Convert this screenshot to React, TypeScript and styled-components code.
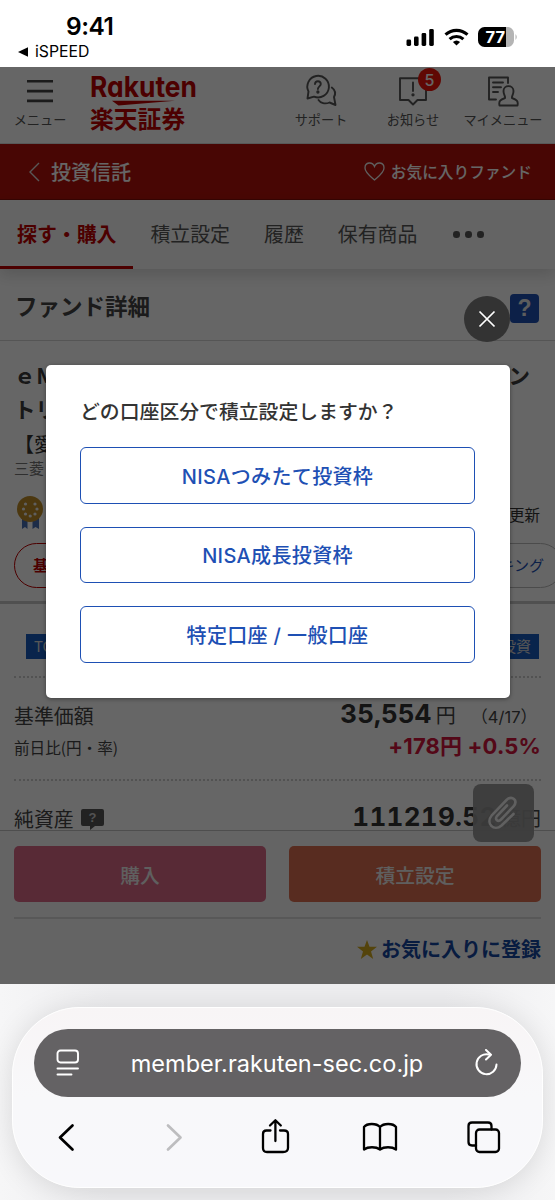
import React from "react";
import styled, { createGlobalStyle } from "styled-components";

const Global = createGlobalStyle`
  * { box-sizing: border-box; }
  body { margin: 0; background: #fff; font-family: Inter, "Noto Sans CJK JP", sans-serif; color: #333; }
  button { font: inherit; border: 0; padding: 0; background: none; color: inherit; }
  svg { display: block; flex: none; }
`;

const Phone = styled.div`
  width: 555px; height: 1200px; display: flex; flex-direction: column; overflow: hidden;
`;

/* status bar */
const Status = styled.header`
  height: 67px; flex: none; display: flex; justify-content: space-between;
  color: #000; background: #fff; padding: 11px 37px 0 18px;
`;
const Clock = styled.div`
  font-size: 24.5px; line-height: 30px; font-weight: 600; letter-spacing: -0.5px; padding-left: 48px;
`;
const BackApp = styled.div`
  display: flex; align-items: center; gap: 7px; font-size: 15.8px; line-height: 24px; margin-top: -1px;
`;
const StatusIcons = styled.div`
  display: flex; align-items: center; gap: 9px; height: 30px; margin-top: 11px;
`;

/* web page */
const Page = styled.main`
  position: relative; height: 917px; flex: none; display: flex; flex-direction: column;
  background: #fff; overflow: hidden; font-family: "Noto Sans CJK JP", sans-serif;
`;
const SiteHeader = styled.div`
  height: 77px; flex: none; display: flex; padding: 0 11px 0 13px; border-bottom: 1px solid #ddd;
`;
const HeaderItem = styled.div<{ $w: number }>`
  width: ${(p) => p.$w}px; display: flex; flex-direction: column; align-items: center;
  padding-top: 7px; font-size: 13.2px; line-height: 20px; color: #555; white-space: nowrap;
  position: relative; svg { margin-bottom: 2px; }
`;
const Logo = styled.div`
  margin: 5px auto 0 23px; width: 112px; color: #bf0000;
`;
const LogoSub = styled.div`
  font-size: 23.8px; line-height: 28px; font-weight: 700; margin-top: -2px; white-space: nowrap;
`;
const Badge = styled.span`
  position: absolute; left: 54px; top: 1px; width: 23px; height: 23px; border-radius: 50%;
  background: #f0160a; color: #fff; display: flex; align-items: center; justify-content: center;
  font: 500 16px/1 Inter, sans-serif;
`;
const RedBar = styled.div`
  height: 56px; flex: none; background: #b4110a; color: #fff; display: flex; align-items: center;
  padding: 0 23px 0 28px; font-weight: 500; border-bottom: 1px solid #8a0d08;
`;
const BarTitle = styled.div`
  display: flex; align-items: center; gap: 11px; font-size: 20px; line-height: 30px; margin-right: auto;
`;
const BarLink = styled.div`
  display: flex; align-items: center; gap: 6px; font-size: 15.7px; line-height: 24px;
`;
const Tabs = styled.nav`
  height: 69px; flex: none; display: flex; position: relative; background: #fafafa;
  box-shadow: 0 6px 14px rgba(0, 0, 0, 0.14);
`;
const Tab = styled.div<{ $on?: boolean }>`
  font-size: 19.9px; line-height: 30px; padding: 19px 17px 0; white-space: nowrap;
  color: ${(p) => (p.$on ? "#bf0000" : "#555")};
  font-weight: ${(p) => (p.$on ? 700 : 400)};
  border-bottom: ${(p) => (p.$on ? "3px solid #bf0000" : "0")};
`;
const Dots = styled.div`
  display: flex; gap: 5.5px; padding: 31px 0 0 19px;
  i { width: 6.5px; height: 6.5px; border-radius: 50%; background: #555; }
`;
const Heading = styled.div`
  height: 72px; flex: none; display: flex; justify-content: space-between; padding: 19px 16px 0 15px;
  border-bottom: 1px solid #d5d5d5; font-size: 22.5px; line-height: 34px; font-weight: 700; color: #444;
`;
const Help = styled.span`
  width: 29px; height: 29px; margin-top: 6px; border-radius: 4px; background: #1e50b4; color: #e8e8e8;
  font: 700 23px/29px "Liberation Sans", sans-serif; text-align: center;
`;
const Body = styled.div`
  height: 489px; flex: none; overflow: hidden; display: flex; flex-direction: column;
  > * { flex-shrink: 0; }
`;
const FundName = styled.h1`
  margin: 17px 0 0 14px; width: 535px; font-size: 21.5px; line-height: 34px; font-weight: 700; color: #3c3c3c; white-space: nowrap;
`;
const Alias = styled.div`
  margin: 3px 0 0 14px; font-size: 20px; line-height: 29px; color: #333;
`;
const Company = styled.div`
  margin: -2px 0 1px 14px; font-size: 15px; line-height: 24px; color: #777;
`;
const Rating = styled.div`
  display: flex; justify-content: space-between; align-items: flex-end; height: 49px;
  padding: 0 15px 0 17px; font-size: 15.5px; line-height: 32px;
`;
const Pills = styled.div`
  display: flex; justify-content: space-between; width: 549px; margin: 13px 0 0 14px;
`;
const Pill = styled.div<{ $on?: boolean }>`
  height: 45px; border-radius: 23px; padding: 0 18px; font-size: 15px; line-height: 41px;
  font-weight: ${(p) => (p.$on ? 700 : 400)};
  border: ${(p) => (p.$on ? "1.5px solid #bf0000" : "1.5px solid #bbb")};
  color: ${(p) => (p.$on ? "#bf0000" : "#1e50b4")};
`;
const Rule = styled.div`
  height: 3px; margin-top: 13px; background: #c8c8c8;
`;
const Tags = styled.div`
  display: flex; justify-content: space-between; margin: 30px 14px 0; padding: 0 2px 17px 12px;
  border-bottom: 2px dotted #ccc;
`;
const Tag = styled.span`
  height: 25px; background: #185abe; color: #d8d8d8; font-size: 15px; line-height: 24px; padding: 0 8px;
`;
const Metric = styled.section`
  height: 103px; margin: 0 14px; display: flex; justify-content: space-between;
  border-bottom: 2px dotted #ccc; padding-top: 21px; white-space: nowrap;
`;
const Labels = styled.div` font-size: 19.9px; line-height: 34px; color: #444; `;
const Sub = styled.div` font-size: 15.6px; line-height: 29px; `;
const LabelRow = styled.div` display: flex; align-items: center; gap: 7px; `;
const Values = styled.div` text-align: right; line-height: 34px; font-size: 20px; color: #444; margin-top: -2px; `;
const Amount = styled.b<{ $ls?: number }>`
  font: 700 26px/34px Inter, sans-serif; font-feature-settings: "tnum"; color: #333;
  letter-spacing: ${(p) => p.$ls ?? 0}px;
`;
const DateNote = styled.span` font: 400 16.5px/34px Inter, "Noto Sans CJK JP", sans-serif; margin: 0 4px 0 11px; `;
const Change = styled.div`
  font: 700 22px/30px Inter, "Noto Sans CJK JP", sans-serif; color: #d2143c; margin-top: -3px; letter-spacing: 0.15px;
`;
const Sticky = styled.footer`
  flex: 1; border-top: 1px solid #c4c4c4; background: #fafafa; padding: 15px 14px 0;
`;
const Actions = styled.div`
  display: grid; grid-template-columns: 252px 252px; justify-content: space-between;
  padding-bottom: 15px; border-bottom: 2px solid #dcdcdc;
`;
const Action = styled.button<{ $bg: string }>`
  height: 56px; border-radius: 5px; background: ${(p) => p.$bg}; color: #eee; font-size: 19.8px; font-weight: 500;
`;
const Favorite = styled.div`
  display: flex; justify-content: flex-end; align-items: center; gap: 4px; margin-top: 15px;
  color: #1446a0; font-size: 20px; line-height: 30px; font-weight: 700;
`;
const Clip = styled.div`
  position: absolute; left: 472.5px; top: 717px; width: 61px; height: 58px; border-radius: 8px;
  background: rgba(150, 150, 150, 0.95); display: grid; place-items: center;
`;

/* dialog */
const Shade = styled.div`
  position: absolute; inset: 0; background: rgba(0, 0, 0, 0.6);
`;
const Dialog = styled.div`
  position: absolute; left: 45.5px; top: 298px; width: 464px; height: 333px; border-radius: 5px;
  background: #fff; padding: 28px 34.500px 0; display: flex; flex-direction: column; gap: 23px;
  box-shadow: 0 1px 4px rgba(0, 0, 0, 0.4);
`;
const Question = styled.h2`
  margin: 0 0 -5px; font-size: 19.85px; line-height: 36px; font-weight: 500; color: #333; white-space: nowrap;
`;
const Choice = styled.button`
  height: 56.6px; flex: none; border: 1.5px solid #1e50b4; border-radius: 6px; color: #1e50b4;
  font: 500 20px/1 Inter, "Noto Sans CJK JP", sans-serif; letter-spacing: 0.35px; white-space: pre; padding-top: 3px;
`;
const Close = styled.button`
  position: absolute; left: 464px; top: 229px; width: 46px; height: 46px; border-radius: 50%;
  background: #333; display: grid; place-items: center;
`;

/* browser controls */
const Browser = styled.div`
  flex: 1; padding: 23px 12px 0; background: linear-gradient(90deg, #f6f6f7, #eeeef0 20%, #eeeef0 80%, #f6f6f7);
`;
const Panel = styled.div`
  height: 181px; border-radius: 68px; padding: 21px; border: 1.5px solid #fff;
  background: linear-gradient(#f8f5f6, #f8f8fa 50%, #f8f8fb);
  box-shadow: 0 3px 30px rgba(0, 0, 0, 0.12);
`;
const Address = styled.div`
  height: 68px; border-radius: 34px; background: #646264; color: #fff; display: flex;
  align-items: center; justify-content: space-between; padding: 0 21px 0 22px;
  font-size: 23.5px;
`;
const Tools = styled.div`
  height: 80px; display: flex; align-items: center; justify-content: space-between; padding: 0 16px 0 12px;
`;

const ToolIcon = ({ children, muted }: { children: React.ReactNode; muted?: boolean }) => (
  <svg width="40" height="40" viewBox="0 0 40 40" fill="none" stroke={muted ? "#bdbdbf" : "#000"}
    strokeWidth="2.3" strokeLinecap="round" strokeLinejoin="round">{children}</svg>
);

const HeaderIcon = ({ children }: { children: React.ReactNode }) => (
  <svg width="36" height="34" viewBox="0 0 36 34" fill="none" stroke="#555" strokeWidth="1.9"
    strokeLinejoin="round" strokeLinecap="round">{children}</svg>
);

export default function App() {
  return (
    <Phone>
      <Global />
      <Status>
        <div>
          <Clock>9:41</Clock>
          <BackApp>
            <svg width="10" height="10" viewBox="0 0 10 10"><path d="M0 5L10 .3V9.7Z" /></svg>
            iSPEED
          </BackApp>
        </div>
        <StatusIcons>
          <svg width="29" height="18" viewBox="0 0 29 18">
            <rect x="0.5" y="11.5" width="4.6" height="6.5" rx="1.4" />
            <rect x="8" y="8.5" width="4.6" height="9.5" rx="1.4" />
            <rect x="15.6" y="5" width="4.6" height="13" rx="1.4" />
            <rect x="23.2" y="1" width="4.6" height="17" rx="1.4" />
          </svg>
          <svg width="25" height="18" viewBox="0 0 25 18" fill="none" stroke="#000" strokeWidth="3.1">
            <path d="M1.5 6.6C7.8.9 17.2.9 23.5 6.6" />
            <path d="M5.6 11.2C9.6 7.5 15.4 7.5 19.4 11.2" />
            <path d="M12.5 17.6L8.9 14.1Q12.5 11 16.1 14.1Z" fill="#000" stroke="none" />
          </svg>
          <svg width="40" height="20" viewBox="0 0 40 20">
            <path d="M6.500 0H29V20H6.500A6.500 6.500 0 0 1 0 13.500V6.500A6.500 6.500 0 0 1 6.500 0Z" />
            <path d="M29 0A6.500 6.500 0 0 1 36 6.500V13.500A6.500 6.500 0 0 1 29 20H28V0Z" fill="#b4b4b4" />
            <path d="M37.500 7Q40 10 37.500 13Z" fill="#b4b4b4" />
            <text x="7.500" y="16" fontFamily="Inter" fontWeight="700" fontSize="16.500" fill="#fff" textLength="19.500">77</text>
          </svg>
        </StatusIcons>
      </Status>

      <Page>
        <SiteHeader>
          <HeaderItem $w={54}>
            <svg width="26" height="34" viewBox="0 0 26 34" stroke="#444" strokeWidth="2.600">
              <path d="M0 7.300H26M0 17.100H26M0 26.900H26" />
            </svg>
            メニュー
          </HeaderItem>
          <Logo>
            <svg width="112" height="34" viewBox="0 0 112 34" fill="#bf0000">
              <text x="0" y="25" fontFamily="Inter, sans-serif" fontWeight="700" fontSize="29" textLength="107"
                lengthAdjust="spacingAndGlyphs" style={{ fontFeatureSettings: '"cv11"' }}>Rakuten</text>
              <path d="M22 28.800H85L28.500 33.500Z" />
            </svg>
            <LogoSub>楽天証券</LogoSub>
          </Logo>
          <HeaderItem $w={86}>
            <HeaderIcon>
              <path d="M4.500 24.500L5.500 17.500A10.800 10.800 0 1 1 11 22.600Z" />
              <path d="M28.800 13.500C32 16 33 19.500 31 23L32.500 31L26.500 28.500C22 30.500 17.500 29 15.500 26" />
              <path d="M12 10Q12.200 7.300 14.900 7.300T17.800 10C17.800 12.300 14.900 12.500 14.900 15" />
              <circle cx="14.900" cy="18" r="0.700" fill="#555" />
            </HeaderIcon>
            サポート
          </HeaderItem>
          <HeaderItem $w={98}>
            <HeaderIcon>
              <path d="M5 4.200H31V26H22.500L18 30.500L13.500 26H5Z" />
              <path d="M18 8.500V17" /><circle cx="18" cy="20.800" r="0.700" fill="#555" />
            </HeaderIcon>
            <Badge>5</Badge>
            お知らせ
          </HeaderItem>
          <HeaderItem $w={82}>
            <HeaderIcon>
              <path d="M11 25.500H4V3.500H23V9M8 8.500H18M8 13.300H16M8 18H13" />
              <path d="M14.500 31.500C13.500 27 15.500 25.500 20 24C20.500 22 18.500 21 18.500 17C18.500 10.500 28.500 10.500 28.500 17C28.500 21 26.500 22 27 24C31.500 25.500 33.500 27 32.500 31.500Z" />
            </HeaderIcon>
            マイメニュー
          </HeaderItem>
        </SiteHeader>

        <RedBar>
          <BarTitle>
            <svg width="12" height="20" viewBox="0 0 12 20" fill="none" stroke="#ddd" strokeWidth="1.400"><path d="M11 1L2 10L11 19" /></svg>
            投資信託
          </BarTitle>
          <BarLink>
            <svg width="21" height="19" viewBox="0 0 21 19" fill="none" stroke="#eee" strokeWidth="1.300">
              <path d="M10.500 18C6 14 1 10.500 1 6C1 -.3 8.500 -.5 10.500 4.500C12.500 -.5 20 -.3 20 6C20 10.500 15 14 10.500 18Z" />
            </svg>
            お気に入りファンド
          </BarLink>
        </RedBar>

        <Tabs>
          <Tab $on>探す・購入</Tab>
          <Tab>積立設定</Tab>
          <Tab>履歴</Tab>
          <Tab>保有商品</Tab>
          <Dots><i /><i /><i /></Dots>
        </Tabs>
        <Heading>ファンド詳細<Help>?</Help></Heading>

        <Body>
          <FundName>ｅＭＡＸＩＳ　Ｓｌｉｍ　全世界株式（オール・カン<br />トリー）</FundName>
          <Alias>【愛称：オルカン】</Alias>
          <Company>三菱ＵＦＪアセットマネジメント</Company>
          <Rating>
            <svg width="26" height="34" viewBox="0 0 26 34">
              <path d="M5 21V33L8 31L10.500 33V21ZM15.500 21V33L18.500 31L22 33V21Z" fill="#466eb4" />
              <circle cx="13" cy="13" r="13" fill="#be8c28" />
              <g fill="#eee">
                <circle cx="8.500" cy="8" r="1.600" /><circle cx="18" cy="8" r="1.600" />
                <circle cx="6.500" cy="13" r="1.600" /><circle cx="20" cy="13" r="1.600" />
                <circle cx="8.500" cy="18" r="1.600" /><circle cx="18" cy="18" r="1.600" />
                <circle cx="13.200" cy="20" r="1.600" />
              </g>
            </svg>
            更新
          </Rating>
          <Pills><Pill $on>基本情報</Pill><Pill>ランキング</Pill></Pills>
          <Rule />
          <Tags><Tag>TOP</Tag><Tag>積立投資</Tag></Tags>
          <Metric>
            <Labels>基準価額<Sub>前日比(円・率)</Sub></Labels>
            <Values>
              <Amount>35,554</Amount> 円 <DateNote>（4/17）</DateNote>
              <Change>+178円 +0.5%</Change>
            </Values>
          </Metric>
          <Metric>
            <Labels>
              <LabelRow>
                純資産
                <svg width="23" height="21" viewBox="0 0 23 21">
                  <path d="M2 0H21Q23 0 23 2V15Q23 17 21 17H14L9 21V17H2Q0 17 0 15V2Q0 0 2 0Z" fill="#555" />
                  <text x="11.500" y="13" textAnchor="middle" fontFamily="Liberation Sans" fontWeight="700" fontSize="13" fill="#ccc">?</text>
                </svg>
              </LabelRow>
            </Labels>
            <Values><Amount $ls={0.3}>111219.52</Amount> 億円</Values>
          </Metric>
        </Body>

        <Sticky>
          <Actions>
            <Action $bg="#dc6987">購入</Action>
            <Action $bg="#dc6e50">積立設定</Action>
          </Actions>
          <Favorite>
            <svg width="20" height="19" viewBox="0 0 20 19"><path d="M10 0L12.500 6.800H20L14 11.400L16.200 19L10 14.500L3.800 19L6 11.400L0 6.800H7.500Z" fill="#d2aa1e" /></svg>
            お気に入りに登録
          </Favorite>
        </Sticky>

        <Clip>
          <svg width="32" height="34" viewBox="0 0 32 34" fill="none" stroke="#f0f0f0" strokeWidth="2.600" strokeLinecap="round">
            <path d="M20 9.500L10 20C7.500 23.500 11 26.500 14 23.500L26.500 10.500C31.500 4 25 -1 19.500 4L5 19C-2 27.500 7 36 14.500 29.500L26.500 18" />
          </svg>
        </Clip>

        <Shade />
        <Dialog>
          <Question>どの口座区分で積立設定しますか？</Question>
          <Choice>NISAつみたて投資枠</Choice>
          <Choice>NISA成長投資枠</Choice>
          <Choice>特定口座 / 一般口座</Choice>
        </Dialog>
        <Close>
          <svg width="18" height="18" viewBox="0 0 18 18" stroke="#fff" strokeWidth="1.700"><path d="M1.500 1.500L16.500 16.500M16.500 1.500L1.500 16.500" /></svg>
        </Close>
      </Page>

      <Browser>
        <Panel>
          <Address>
            <svg width="24" height="28" viewBox="0 0 24 28" fill="none" stroke="#fff" strokeWidth="1.900" strokeLinecap="round">
              <rect x="1.500" y="1.500" width="20.500" height="12" rx="3" /><path d="M1.500 19.500H22M1.500 25.500H15.500" />
            </svg>
            <span>member.rakuten-sec.co.jp</span>
            <svg width="26" height="28" viewBox="0 0 26 28" fill="none" stroke="#fff" strokeWidth="2" strokeLinecap="round" strokeLinejoin="round">
              <path d="M15 5.500A10 10 0 1 0 22.500 15.500" /><path d="M12 1L17 5.700L12 10.500" />
            </svg>
          </Address>
          <Tools>
            <ToolIcon><path d="M26.500 8.500L14 20.500L26.500 32.500" strokeWidth="2.700" /></ToolIcon>
            <ToolIcon muted><path d="M17 8.500L29.500 20.500L17 32.500" strokeWidth="2.700" /></ToolIcon>
            <ToolIcon>
              <path d="M14.500 13.500H10.500Q7 13.500 7 17V31Q7 35 11 35H27Q32 35 32 31V17Q32 13.500 28 13.500H24" />
              <path d="M19.400 24V3.500M14 8.500L19.400 3.200L24.800 8.500" />
            </ToolIcon>
            <ToolIcon>
              <path d="M20 10C16.500 6 7 6 4 10V32.500C8 29.500 16 29.500 20 32.500C24 29.500 32 29.500 36 32.500V10C33 6 23.500 6 20 10ZV32.500" />
            </ToolIcon>
            <ToolIcon>
              <path d="M11 28.500H7Q3.500 28.500 3.500 25V9Q3.500 5.500 7 5.500H23Q26.500 5.500 26.500 9V12.500" />
              <rect x="11" y="12.500" width="23" height="22.500" rx="3.500" />
            </ToolIcon>
          </Tools>
        </Panel>
      </Browser>
    </Phone>
  );
}
